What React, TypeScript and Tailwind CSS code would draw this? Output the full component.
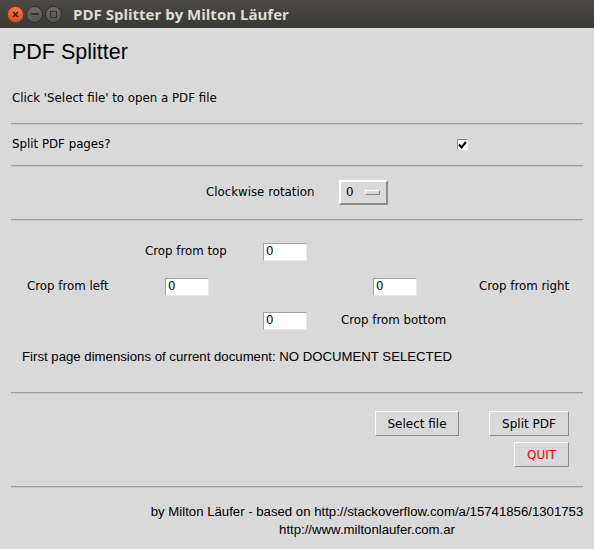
import React from "react";

const ui = { fontFamily: '"DejaVu Sans", sans-serif' };
const helv = { fontFamily: '"Liberation Sans", Arial, sans-serif' };

function Sep() {
  return (
    <div className="mx-[11px] flex flex-col shrink-0">
      <div className="h-px bg-[#a0a0a0]" />
      <div className="h-px bg-[#c6c6c6]" />
    </div>
  );
}

function Entry() {
  return (
    <div
      className="w-[44px] h-[18px] bg-white border border-t-[#a2a2a2] border-l-[#a2a2a2] border-r-[#e8e8e8] border-b-[#e8e8e8] flex items-center pl-[2px] pt-[1px] text-[11.8px] text-black leading-none"
      style={ui}
    >
      0
    </div>
  );
}

function TkButton({ label, red, w }: { label: string; red?: boolean; w: string }) {
  return (
    <div
      className={`${w} h-[25px] flex items-center justify-center pt-[1px] border border-t-white border-l-white border-r-[#8e8e8e] border-b-[#8e8e8e] bg-[#d9d9d9] text-[12px] ${red ? "text-[#ff0000]" : "text-black"}`}
      style={ui}
    >
      {label}
    </div>
  );
}

export default function App() {
  return (
    <div className="w-[594px] h-[549px] bg-[#d9d9d9] flex flex-col overflow-hidden">
      {/* title bar */}
      <div className="h-[28px] bg-gradient-to-b from-[#4a4944] to-[#3a3935] flex items-center shrink-0">
        <div className="ml-[7px] w-[17px] h-[17px] rounded-full bg-gradient-to-b from-[#f2784a] to-[#df4a1c] border border-[#8c3413] flex items-center justify-center">
          <svg width="7" height="7" viewBox="0 0 7 7">
            <path d="M1 1 L6 6 M6 1 L1 6" stroke="#3a1a0c" strokeWidth="1.4" />
          </svg>
        </div>
        <div className="ml-[2px] w-[17px] h-[17px] rounded-full bg-gradient-to-b from-[#6c6b66] to-[#55544f] border border-[#2e2d2a] flex items-center justify-center">
          <div className="w-[8px] h-[2px] bg-[#35342f]" />
        </div>
        <div className="ml-[2px] w-[17px] h-[17px] rounded-full bg-gradient-to-b from-[#6c6b66] to-[#55544f] border border-[#2e2d2a] flex items-center justify-center">
          <div className="w-[7px] h-[7px] border-[1.5px] border-[#35342f]" />
        </div>
        <div
          className="ml-[11px] text-[15px] font-bold text-[#dfdbd2] leading-none pt-[1px]"
          style={{ fontFamily: '"Open Sans", "DejaVu Sans", sans-serif' }}
        >
          PDF Splitter by Milton Läufer
        </div>
      </div>

      {/* heading */}
      <div className="h-[48px] flex items-center px-[12px] shrink-0">
        <span className="text-[21.5px] text-black" style={helv}>
          PDF Splitter
        </span>
      </div>

      <div className="h-[44px] flex items-center px-[12px] pt-[2px] text-[11.8px] text-black shrink-0" style={ui}>
        Click 'Select file' to open a PDF file
      </div>
      <div className="h-[3px] shrink-0" />
      <Sep />

      <div className="h-[36px] flex items-center shrink-0 pt-[3px] text-[11.8px] text-black" style={ui}>
        <span className="ml-[12px] w-[445px] mt-[1px]">Split PDF pages?</span>
        <div className="w-[11px] h-[11px] bg-white border border-t-[#8a8a8a] border-l-[#8a8a8a] border-r-white border-b-white flex items-center justify-center">
          <svg width="9" height="8" viewBox="0 0 9 8">
            <path d="M1 3.5 L3.5 6.5 L8 1" fill="none" stroke="#000" strokeWidth="2" />
          </svg>
        </div>
      </div>
      <div className="h-[4px] shrink-0" />
      <Sep />

      <div className="h-[48px] flex items-center shrink-0 pt-[2px] text-[11.8px] text-black" style={ui}>
        <span className="ml-[206px] w-[133px] mt-[2px]">Clockwise rotation</span>
        <div className="w-[49px] h-[25px] flex items-center pt-[2px] border-2 border-t-white border-l-white border-r-[#8a8a8a] border-b-[#8a8a8a]">
          <span className="ml-[5px] w-[19px]">0</span>
          <div className="w-[15px] h-[5px] mb-[2px] border border-t-white border-l-white border-r-[#8a8a8a] border-b-[#8a8a8a]" />
        </div>
      </div>
      <div className="h-[4px] shrink-0" />
      <Sep />

      {/* crop area */}
      <div className="flex flex-col text-[11.8px] text-black shrink-0" style={ui}>
        <div className="h-[13px]" />
        <div className="h-[35px] flex items-center">
          <span className="ml-[145px] w-[118px]">Crop from top</span>
          <Entry />
        </div>
        <div className="h-[35px] flex items-center">
          <span className="ml-[27px] w-[138px]">Crop from left</span>
          <Entry />
          <div className="w-[164px]" />
          <Entry />
          <span className="ml-[62px]">Crop from right</span>
        </div>
        <div className="h-[33px] flex items-center">
          <div className="w-[263px]" />
          <Entry />
          <span className="ml-[34px]">Crop from bottom</span>
        </div>
        <div className="h-[40px] flex items-center">
          <span className="ml-[22px] text-[13.2px]" style={helv}>
            First page dimensions of current document: NO DOCUMENT SELECTED
          </span>
        </div>
        <div className="h-[15px]" />
      </div>
      <Sep />

      {/* buttons */}
      <div className="flex flex-col items-end pr-[25px] shrink-0">
        <div className="h-[17px]" />
        <div className="flex gap-[30px]">
          <TkButton label="Select file" w="w-[84px]" />
          <TkButton label="Split PDF" w="w-[80px]" />
        </div>
        <div className="h-[6px]" />
        <TkButton label="QUIT" red w="w-[55px]" />
        <div className="h-[19px]" />
      </div>
      <Sep />

      {/* footer */}
      <div className="flex flex-col items-center pl-[140px] pt-[15px] text-[13.2px] text-black leading-[18px]" style={helv}>
        <span>by Milton Läufer - based on http://stackoverflow.com/a/15741856/1301753</span>
        <span>http://www.miltonlaufer.com.ar</span>
      </div>
    </div>
  );
}
